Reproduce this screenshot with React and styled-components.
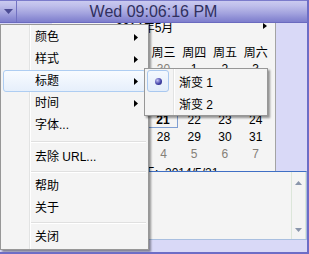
import React from 'react';
import styled, { createGlobalStyle } from 'styled-components';

const GlobalStyle = createGlobalStyle`
  html, body {
    margin: 0;
    padding: 0;
    background: #d9d9f7;
  }
  body {
    font-family: "Liberation Sans", "Noto Sans CJK SC", sans-serif;
    font-size: 12px;
  }
  * {
    box-sizing: border-box;
  }
`;

const Window = styled.div`
  position: relative;
  width: 309px;
  height: 254px;
  display: flex;
  flex-direction: column;
  background: #d9d9f7;
  border-right: 2px solid #6d6dc6;
  border-bottom: 2px solid #6d6dc6;
  overflow: hidden;
`;

const Header = styled.div`
  flex: none;
  height: 23px;
  display: flex;
  border-top: 1px solid #7b7bcb;
  border-bottom: 1px solid #6a6abf;
  background: linear-gradient(
    #cacaf0 0%,
    #bfbfeb 22%,
    #b0b0e4 42%,
    #a0a0dd 62%,
    #8d8dd4 82%,
    #7e7ecd 100%
  );
`;

const DropButton = styled.div`
  width: 17px;
  display: flex;
  align-items: center;
  justify-content: center;
  border-right: 1px solid #7272c2;
  padding-bottom: 1px;
`;

const Clock = styled.div`
  flex: 1;
  margin-right: 17px;
  text-align: center;
  font-size: 16px;
  line-height: 21px;
  color: #30305e;
`;

const Calendar = styled.div`
  flex: none;
  width: 224px;
  height: 148px;
  margin-left: 52px;
  padding: 0 4px;
  background: #f4f4f4;
  border-right: 1px solid #a3a3a3;
  overflow: hidden;
`;

const CalTitle = styled.div`
  height: 11px;
  display: flex;
  align-items: flex-start;
  line-height: 11px;
  color: #000;
`;

const MonthName = styled.span`
  margin-left: 60px;
  flex: 1;
`;

const Grid = styled.div`
  display: grid;
  grid-template-columns: repeat(7, 1fr);
  margin-top: ${(p) => p.$top || 0}px;
`;

const Cell = styled.div`
  height: ${(p) => p.$h}px;
  line-height: ${(p) => p.$h}px;
  text-align: center;
  color: ${(p) => (p.$muted ? '#858078' : '#000')};
  font-weight: ${(p) => (p.$today ? 'bold' : 'normal')};
  border: 1px solid ${(p) => (p.$today ? '#7f9fd3' : 'transparent')};
  margin-right: ${(p) => (p.$today ? 1 : 0)}px;
  font-size: 12px;
`;

const TodayLine = styled.div`
  height: 16px;
  line-height: 16px;
  margin-top: 3px;
  padding-left: 75px;
  color: #000;
`;

const NoteBox = styled.div`
  flex: none;
  width: 304px;
  height: 69px;
  margin-left: 3px;
  display: flex;
  justify-content: flex-end;
  background: #f4f4f4;
  border: 1px solid #a9bfe0;
  border-top-color: #3f6fc4;
`;

const ScrollBar = styled.div`
  width: 15px;
  display: flex;
  flex-direction: column;
  justify-content: space-between;
  align-items: center;
  padding: 9px 0 7px;
  border-left: 1px solid #dce6da;
  border-right: 1px solid #dce6da;
`;

const Menu = styled.div`
  position: absolute;
  left: 0;
  top: 24px;
  width: 149px;
  padding: 1px 2px;
  border: 1px solid #979797;
  background: linear-gradient(
    to right,
    #f4f4f4 28px,
    #e2e3e3 28px,
    #e2e3e3 29px,
    #ffffff 29px,
    #ffffff 30px,
    #f4f4f4 30px
  );
  box-shadow: 2px 2px 2px rgba(0, 0, 0, 0.4);
`;

const SubMenu = styled(Menu)`
  left: 144px;
  top: 68px;
  width: 124px;
`;

const Item = styled.div`
  height: 22px;
  display: flex;
  align-items: center;
  padding-left: 31px;
  padding-right: 7px;
  border: 1px solid ${(p) => (p.$active ? '#aecdf2' : 'transparent')};
  border-radius: 3px;
  background: ${(p) => (p.$active ? 'linear-gradient(#f8fbff, #e6effb)' : 'transparent')};
  color: #000;
  line-height: 20px;
`;

const Label = styled.span`
  flex: 1;
`;

const Separator = styled.div`
  height: ${(p) => p.$h}px;
  display: flex;
  align-items: center;
  margin-left: 28px;

  &::before {
    content: '';
    flex: 1;
    height: 1px;
    background: #e0e0e0;
    box-shadow: 0 1px 0 #ffffff;
  }
`;

const SubItem = styled.div`
  height: 22px;
  display: flex;
  align-items: center;
  color: #000;
`;

const CheckSlot = styled.div`
  width: 22px;
  height: 22px;
  display: flex;
  align-items: center;
  justify-content: center;
  border-radius: 3px;
  border: 1px solid ${(p) => (p.$on ? '#a9c8ef' : 'transparent')};
  background: ${(p) => (p.$on ? 'linear-gradient(#f3f8fe, #e3edfa)' : 'transparent')};
`;

const Bullet = styled.div`
  width: 7px;
  height: 7px;
  border-radius: 50%;
  background: radial-gradient(circle at 35% 35%, #c4c4f4 0%, #4444aa 55%, #1c1c6a 100%);
`;

const SubLabel = styled.span`
  margin-left: 10px;
`;

const Arrow = () => (
  <svg width="4" height="7" viewBox="0 0 4 7">
    <polygon points="0,0 4,3.5 0,7" fill="#000" />
  </svg>
);

const menuItems = [
  { label: '颜色', sub: true },
  { label: '样式', sub: true },
  { label: '标题', sub: true, active: true },
  { label: '时间', sub: true },
  { label: '字体...' },
  { sep: 10 },
  { label: '去除 URL...' },
  { sep: 7 },
  { label: '帮助' },
  { label: '关于' },
  { sep: 7 },
  { label: '关闭' },
];

const weekDays = ['周日', '周一', '周二', '周三', '周四', '周五', '周六'];

const weeks = [
  [27, 28, 29, 30, 1, 2, 3],
  [4, 5, 6, 7, 8, 9, 10],
  [11, 12, 13, 14, 15, 16, 17],
  [18, 19, 20, 21, 22, 23, 24],
  [25, 26, 27, 28, 29, 30, 31],
  [1, 2, 3, 4, 5, 6, 7],
];

const isMuted = (w, i) => (w === 0 && i < 4) || w === 5;

export default function App() {
  return (
    <>
      <GlobalStyle />
      <Window>
        <Header>
          <DropButton>
            <svg width="9" height="5" viewBox="0 0 9 5">
              <polygon points="0,0 9,0 4.5,5" fill="#4c4c94" />
            </svg>
          </DropButton>
          <Clock>Wed 09:06:16 PM</Clock>
        </Header>

        <Calendar>
          <CalTitle>
            <MonthName>2014年5月</MonthName>
            <svg width="4" height="6" viewBox="0 0 4 6" style={{ marginRight: 4 }}>
              <polygon points="0,0 4,3 0,6" fill="#000" />
            </svg>
          </CalTitle>
          <Grid $top={10}>
            {weekDays.map((d) => (
              <Cell key={d} $h={16}>{d}</Cell>
            ))}
          </Grid>
          {weeks.map((week, w) => (
            <Grid key={w}>
              {week.map((day, i) => (
                <Cell
                  key={i}
                  $h={17}
                  $muted={isMuted(w, i)}
                  $today={w === 3 && day === 21}
                >
                  {day}
                </Cell>
              ))}
            </Grid>
          ))}
          <TodayLine>今天:&nbsp;&nbsp;2014/5/21</TodayLine>
        </Calendar>

        <NoteBox>
          <ScrollBar>
            <svg width="7" height="4" viewBox="0 0 7 4">
              <polygon points="0,4 7,4 3.5,0" fill="#8a96ab" />
            </svg>
            <svg width="7" height="4" viewBox="0 0 7 4">
              <polygon points="0,0 7,0 3.5,4" fill="#8a96ab" />
            </svg>
          </ScrollBar>
        </NoteBox>

        <Menu>
          {menuItems.map((m, i) =>
            m.sep ? (
              <Separator key={i} $h={m.sep} />
            ) : (
              <Item key={i} $active={m.active}>
                <Label>{m.label}</Label>
                {m.sub && <Arrow />}
              </Item>
            )
          )}
        </Menu>

        <SubMenu>
          <SubItem>
            <CheckSlot $on>
              <Bullet />
            </CheckSlot>
            <SubLabel>渐变 1</SubLabel>
          </SubItem>
          <SubItem>
            <CheckSlot />
            <SubLabel>渐变 2</SubLabel>
          </SubItem>
        </SubMenu>
      </Window>
    </>
  );
}
